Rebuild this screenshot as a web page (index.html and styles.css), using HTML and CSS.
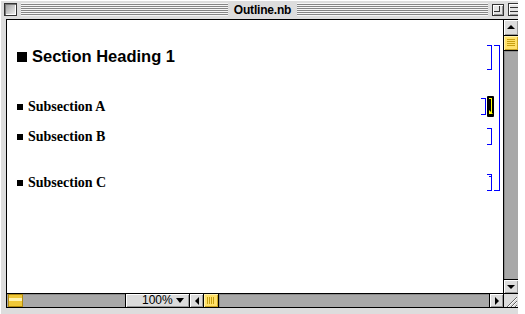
FILE: index.html
```html
<!DOCTYPE html>
<html lang="en">
  <head>
    <meta charset="utf8">
    <title>Outline.nb</title>
    <link rel="stylesheet" href="styles.css">
  </head>

  <body>
    <div class="window">
      <div class="titlebar">
        <span class="box close-box"></span>
        <span class="stripes stripes-left"></span>
        <span class="title">Outline.nb</span>
        <span class="stripes stripes-right"></span>
        <span class="box zoom-box"></span>
        <span class="box collapse-box"></span>
      </div>

      <div class="frame">
        <main class="notebook">
          <div class="group">
            <div class="cells">
              <div class="cell section">
                <div class="cell-text"><span class="bullet"></span>Section Heading 1</div>
                <span class="bracket"></span>
              </div>
              <div class="cell subsection closed">
                <div class="cell-text"><span class="bullet"></span>Subsection A</div>
                <span class="bracket"></span>
                <span class="bracket-selected"></span>
              </div>
              <div class="cell subsection cell-b">
                <div class="cell-text"><span class="bullet"></span>Subsection B</div>
                <span class="bracket"></span>
              </div>
              <div class="cell subsection cell-c">
                <div class="cell-text"><span class="bullet"></span>Subsection C</div>
                <span class="bracket"></span>
              </div>
            </div>
            <span class="bracket group-bracket"></span>
          </div>
        </main>

        <div class="vscroll">
          <div class="arrow arrow-up"></div>
          <div class="thumb thumb-v"></div>
          <div class="track"></div>
          <div class="arrow arrow-down"></div>
        </div>

        <div class="hbar">
          <div class="magnifier">
            <span class="magnifier-knob"></span>
          </div>
          <div class="zoom-popup">100%<span class="caret"></span></div>
          <div class="arrow arrow-left"></div>
          <div class="thumb thumb-h"></div>
          <div class="track"></div>
          <div class="arrow arrow-right"></div>
        </div>

        <div class="grow-box">
          <svg width="14" height="14" viewBox="0 0 14 14">
            <path d="M3 13 L13 3 M7 13 L13 7 M11 13 L13 11" stroke="#666" stroke-width="1"/>
            <path d="M4 13 L13 4 M8 13 L13 8 M12 13 L13 12" stroke="#fff" stroke-width="1"/>
          </svg>
        </div>
      </div>
    </div>
  </body>
</html>
```

FILE: styles.css
```css
html, body {
  margin: 0;
  background: #fff;
}

.window {
  width: 518px;
  height: 314px;
  overflow: hidden;
  background: #dddddd;
  box-shadow: inset 1px 1px #fff;
  font-family: "Liberation Sans", Arial, sans-serif;
}

/* title bar */

.titlebar {
  display: flex;
  align-items: center;
  height: 19px;
  padding-left: 4px;
}
.titlebar > span {
  flex: none;
}

.box {
  position: relative;
  box-sizing: border-box;
  width: 13px;
  height: 13px;
  border: 1px solid #333;
  background: linear-gradient(135deg, #9a9a9a, #f4f4f4);
  box-shadow: inset 1px 1px #777, inset -1px -1px #fff;
}
.zoom-box {
  width: 12px;
  height: 12px;
  margin-left: 4px;
  background: #e4e4e4;
  box-shadow: inset 1px 1px #fff, inset -1px -1px #999;
}
.zoom-box::before {
  content: "";
  position: absolute;
  top: 1px;
  left: 1px;
  width: 5px;
  height: 5px;
  border: 1px solid #333;
  border-top: 0;
  border-left: 0;
}
.collapse-box {
  margin-left: 4px;
  background: #e4e4e4;
  box-shadow: inset 1px 1px #fff, inset -1px -1px #999;
}
.collapse-box::before {
  content: "";
  position: absolute;
  top: 3px;
  left: 1px;
  right: 1px;
  height: 3px;
  border-top: 1px solid #333;
  border-bottom: 1px solid #333;
}

.stripes {
  height: 13px;
  background: repeating-linear-gradient(to bottom, #f6f6f6 0 1px, #858585 1px 2px);
}
.stripes-left {
  width: 207px;
  margin-left: 4px;
}
.stripes-right {
  width: 191px;
}

.title {
  width: 69px;
  text-align: center;
  font-size: 12px;
  font-weight: bold;
  letter-spacing: -0.2px;
  color: #000;
}

/* window frame */

.frame {
  display: grid;
  grid-template-columns: 496px 15px;
  grid-template-rows: 273px 15px;
  margin-left: 6px;
  border-left: 1px solid #000;
  border-top: 1px solid #000;
}

.notebook {
  background: #fff;
  padding: 25px 3px 0 10px;
}

.group {
  display: flex;
}
.cells {
  flex: 1;
  display: flex;
  flex-direction: column;
}

.cell {
  display: flex;
}
.cell-text {
  flex: 1;
}

.section {
  height: 25px;
  line-height: 23px;
  font-size: 16.5px;
  font-weight: bold;
}
.section .bullet {
  display: inline-block;
  width: 10px;
  height: 10px;
  margin-right: 5px;
  background: #000;
}

.subsection {
  height: 17px;
  line-height: 17px;
  font-family: "Liberation Serif", "Times New Roman", serif;
  font-size: 14px;
  font-weight: bold;
}
.subsection .bullet {
  display: inline-block;
  width: 6px;
  height: 6px;
  margin-right: 5px;
  vertical-align: 1px;
  background: #000;
}

.closed {
  height: 21px;
  line-height: 21px;
  margin-top: 26px;
}
.cell-b {
  margin-top: 11px;
}
.cell-c {
  margin-top: 29px;
}

.bracket {
  flex: none;
  position: relative;
  box-sizing: border-box;
  width: 5px;
  margin-right: 2px;
  border: 1px solid #0000ff;
  border-left: 0;
}
.closed .bracket {
  margin: 2px 1px 2px 0;
}
.cell-c .bracket::before {
  content: "";
  position: absolute;
  top: 1px;
  right: 0;
  width: 2px;
  border-top: 1px solid #0000ff;
}

.bracket-selected {
  flex: none;
  position: relative;
  width: 7px;
  background: #000;
  border-radius: 1px;
}
.bracket-selected::before {
  content: "";
  position: absolute;
  top: 2px;
  left: 2px;
  width: 2px;
  height: 14px;
  border: 1px solid #ffff00;
  border-left: 0;
  border-bottom: 0;
}
.bracket-selected::after {
  content: "";
  position: absolute;
  left: 2px;
  bottom: 3px;
  border-left: 4px solid #ffff00;
  border-top: 4px solid transparent;
}

.group-bracket {
  width: 6px;
  margin-right: 0;
}

/* scroll bars */

.track {
  flex: 1;
  background: #a8a8a8;
  box-shadow: inset 1px 1px #8a8a8a;
}

.arrow {
  position: relative;
  box-sizing: border-box;
  background: #dcdcdc;
  box-shadow: inset 1px 1px #fff, inset -1px -1px #9a9a9a;
}
.arrow::before {
  content: "";
  position: absolute;
  top: 50%;
  left: 50%;
}

.vscroll {
  display: flex;
  flex-direction: column;
  border-left: 1px solid #000;
}
.arrow-up {
  height: 16px;
  border-bottom: 1px solid #000;
}
.arrow-up::before {
  margin: -3px 0 0 -4px;
  border-left: 4px solid transparent;
  border-right: 4px solid transparent;
  border-bottom: 4px solid #000;
}
.arrow-down {
  height: 14px;
  border-top: 1px solid #000;
}
.arrow-down::before {
  margin: -2px 0 0 -4px;
  border-left: 4px solid transparent;
  border-right: 4px solid transparent;
  border-top: 4px solid #000;
}

.thumb {
  position: relative;
  box-sizing: border-box;
  background: #ffe16a;
  box-shadow: inset 1px 1px #fff3b0, inset -1px -1px #c9a424;
}
.thumb::before {
  content: "";
  position: absolute;
  top: 3px;
  left: 3px;
  right: 3px;
  bottom: 3px;
}
.thumb-v {
  height: 15px;
  border-bottom: 1px solid #000;
}
.thumb-v::before {
  background: repeating-linear-gradient(to bottom, #c79f10 0 1px, transparent 1px 2px);
}
.thumb-h {
  width: 15px;
  border-right: 1px solid #000;
}
.thumb-h::before {
  background: repeating-linear-gradient(to right, #c79f10 0 1px, transparent 1px 2px);
}

.hbar {
  display: flex;
  border-top: 1px solid #000;
  border-bottom: 1px solid #000;
}

.magnifier {
  display: flex;
  box-sizing: border-box;
  width: 119px;
  padding-left: 1px;
  border-right: 1px solid #000;
  background: #a8a8a8;
  box-shadow: inset 0 1px #8a8a8a;
}
.magnifier-knob {
  box-sizing: border-box;
  width: 15px;
  border: 1px solid #b08a10;
  background: linear-gradient(to bottom, #f0c838 0 3px, #fff3b0 3px 6px, #f0c838 6px);
}

.zoom-popup {
  display: flex;
  align-items: center;
  box-sizing: border-box;
  width: 64px;
  padding-left: 16px;
  border-right: 1px solid #000;
  background: #dcdcdc;
  box-shadow: inset 1px 1px #fff, inset -1px -1px #9a9a9a;
  font-size: 12px;
  line-height: 13px;
}
.caret {
  margin-left: 3px;
  border-left: 4px solid transparent;
  border-right: 4px solid transparent;
  border-top: 5px solid #000;
}

.arrow-left {
  width: 14px;
  border-right: 1px solid #000;
}
.arrow-left::before {
  margin: -4px 0 0 -2px;
  border-top: 4px solid transparent;
  border-bottom: 4px solid transparent;
  border-right: 4px solid #000;
}
.arrow-right {
  width: 14px;
  border-left: 1px solid #000;
}
.arrow-right::before {
  margin: -4px 0 0 -2px;
  border-top: 4px solid transparent;
  border-bottom: 4px solid transparent;
  border-left: 4px solid #000;
}

.grow-box {
  border-left: 1px solid #000;
  border-top: 1px solid #000;
  border-bottom: 1px solid #000;
  background: #dcdcdc;
  overflow: hidden;
}
.grow-box svg {
  display: block;
}
```
